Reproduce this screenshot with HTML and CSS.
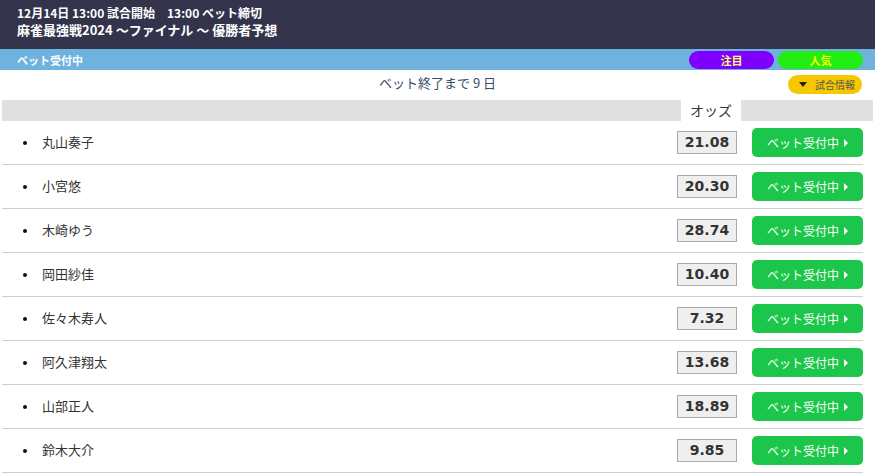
FILE: index.html
```html
<!DOCTYPE html>
<html lang="ja">
<head>
    <meta charset="UTF-8">
    <meta name="viewport" content="width=device-width, initial-scale=1.0">
    <title>優勝者予想</title>
    <link rel="stylesheet" href="styles.css">
</head>
<body>
    <header class="match-head">
        <p class="match-time">12月14日 13:00 試合開始　13:00 ベット締切</p>
        <h1>麻雀最強戦2024 ～ファイナル ～ 優勝者予想</h1>
    </header>

    <div class="status-bar">
        <span class="status-label">ベット受付中</span>
        <div class="tags">
            <span class="tag tag-hot">注目</span>
            <span class="tag tag-popular">人気</span>
        </div>
    </div>

    <div class="info-row">
        <span></span>
        <p class="remaining">ベット終了まで 9 日</p>
        <button class="info-button"><span class="arrow-down"></span>試合情報</button>
    </div>

    <div class="list-head">
        <span class="odds-tab">オッズ</span>
    </div>

    <ul class="players" id="players">
        <!-- rows rendered by the script -->
    </ul>

    <script>
        const players = [
            { name: '丸山奏子', odds: '21.08' },
            { name: '小宮悠', odds: '20.30' },
            { name: '木崎ゆう', odds: '28.74' },
            { name: '岡田紗佳', odds: '10.40' },
            { name: '佐々木寿人', odds: '7.32' },
            { name: '阿久津翔太', odds: '13.68' },
            { name: '山部正人', odds: '18.89' },
            { name: '鈴木大介', odds: '9.85' }
        ];

        const list = document.getElementById('players');
        players.forEach((p) => {
            const li = document.createElement('li');
            li.className = 'player';
            li.innerHTML = `
                <span class="player-name">${p.name}</span>
                <span class="odds">${p.odds}</span>
                <button class="bet-button">ベット受付中<span class="arrow-right"></span></button>
            `;
            list.appendChild(li);
        });
    </script>
</body>
</html>
```

FILE: styles.css
```css
body {
    margin: 0;
    padding: 0;
    font-family: "Noto Sans CJK JP", "Noto Sans", sans-serif;
    color: #333;
    background-color: #fff;
}
.match-head {
    background-color: #33334b;
    color: #fff;
    padding: 4px 17px 0 17px;
    height: 45px;
}
.match-time {
    margin: 0;
    font-size: 12px;
    font-weight: bold;
    line-height: 17px;
}
.match-head h1 {
    margin: 0;
    font-size: 13px;
    font-weight: bold;
    line-height: 18px;
}
.status-bar {
    background-color: #6db3dd;
    height: 21px;
    display: flex;
    align-items: center;
    justify-content: space-between;
    padding: 0 12px 0 17px;
}
.status-label {
    color: #fff;
    font-size: 11px;
    font-weight: bold;
}
.tags {
    display: flex;
    gap: 4px;
}
.tag {
    width: 85px;
    height: 18px;
    border-radius: 9px;
    font-size: 11px;
    font-weight: bold;
    line-height: 18px;
    text-align: center;
}
.tag-hot {
    background-color: #7f00ff;
    color: #ffff66;
}
.tag-popular {
    background-color: #22ee11;
    color: #ffff00;
}
.info-row {
    display: grid;
    grid-template-columns: 1fr auto 1fr;
    align-items: center;
    height: 30px;
}
.remaining {
    margin: 0;
    font-size: 13px;
    color: #3b4a6b;
    margin-top: -6px;
}
.info-button {
    justify-self: end;
    margin-right: 13px;
    margin-top: -2px;
    width: 74px;
    height: 19px;
    border: none;
    border-radius: 10px;
    background-color: #f7c800;
    color: #555;
    font-family: inherit;
    font-size: 10px;
    display: flex;
    align-items: center;
    justify-content: center;
    gap: 8px;
    padding: 0 0 0 4px;
}
.arrow-down {
    width: 0;
    height: 0;
    border-left: 4px solid transparent;
    border-right: 4px solid transparent;
    border-top: 5px solid #222;
}
.list-head {
    background-color: #e0e0e0;
    height: 21px;
    margin: 0 2px;
    display: flex;
    justify-content: flex-end;
    padding-right: 132px;
}
.odds-tab {
    background-color: #fff;
    width: 60px;
    text-align: center;
    font-size: 14px;
    line-height: 21px;
    color: #333;
}
.players {
    list-style: none;
    margin: 0 12px 0 2px;
    padding: 0;
}
.player {
    display: flex;
    align-items: center;
    height: 43px;
    border-bottom: 1px solid #cfcfcf;
}
.player-name {
    flex: 1;
    font-size: 13px;
    color: #333;
    padding-left: 40px;
    margin-top: -2px;
    position: relative;
}
.player-name::before {
    content: "";
    position: absolute;
    left: 21px;
    top: 50%;
    width: 4px;
    height: 4px;
    margin-top: -1px;
    border-radius: 50%;
    background-color: #111;
}
.odds {
    width: 58px;
    height: 21px;
    border: 1px solid #aaa;
    background-color: #efefef;
    font-family: "DejaVu Sans", Verdana, sans-serif;
    font-size: 14px;
    font-weight: bold;
    line-height: 21px;
    text-align: center;
    color: #333;
    margin-right: 15px;
}
.bet-button {
    width: 111px;
    height: 29px;
    border: none;
    border-radius: 5px;
    background-color: #1cc64a;
    color: #fff;
    font-family: inherit;
    font-size: 12px;
    display: flex;
    align-items: center;
    justify-content: center;
    gap: 5px;
    padding: 0;
    cursor: pointer;
}
.arrow-right {
    width: 0;
    height: 0;
    border-top: 4px solid transparent;
    border-bottom: 4px solid transparent;
    border-left: 4px solid #fff;
}
```
